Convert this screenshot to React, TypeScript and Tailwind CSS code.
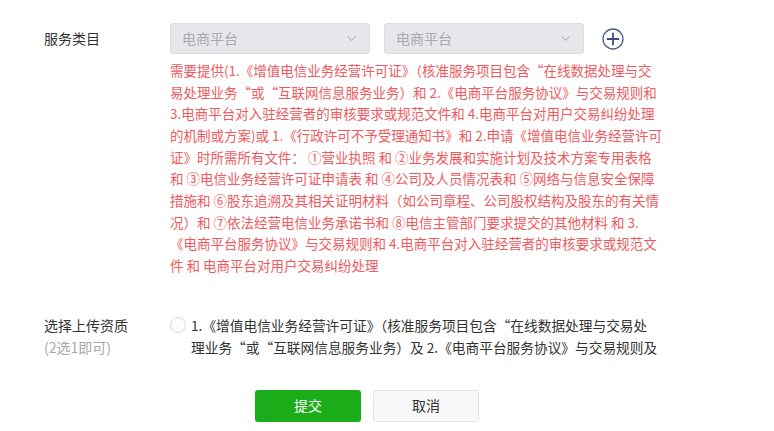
import { ChevronDown } from "lucide-react";

const notice = [
  "需要提供(1.《增值电信业务经营许可证》（核准服务项目包含“在线数据处理与交",
  "易处理业务“或“互联网信息服务业务）和 2.《电商平台服务协议》与交易规则和",
  "3.电商平台对入驻经营者的审核要求或规范文件和 4.电商平台对用户交易纠纷处理",
  "的机制或方案)或 1.《行政许可不予受理通知书》和 2.申请《增值电信业务经营许可",
  "证》时所需所有文件： ①营业执照 和 ②业务发展和实施计划及技术方案专用表格",
  "和 ③电信业务经营许可证申请表 和 ④公司及人员情况表和 ⑤网络与信息安全保障",
  "措施和 ⑥股东追溯及其相关证明材料（如公司章程、公司股权结构及股东的有关情",
  "况）和 ⑦依法经营电信业务承诺书和 ⑧电信主管部门要求提交的其他材料 和 3.",
  "《电商平台服务协议》与交易规则和 4.电商平台对入驻经营者的审核要求或规范文",
  "件 和 电商平台对用户交易纠纷处理",
];

const option = [
  "1.《增值电信业务经营许可证》（核准服务项目包含“在线数据处理与交易处",
  "理业务“或“互联网信息服务业务）及 2.《电商平台服务协议》与交易规则及",
];

function Select() {
  return (
    <div className="flex h-[31px] w-[200px] items-center justify-between rounded-[3px] border border-[#dcdce1] bg-[#e6e6eb] pl-[11px] pr-[10px] text-[#a9a9ae]">
      <span>电商平台</span>
      <ChevronDown size={15} strokeWidth={1.6} className="text-[#9a9aa0]" />
    </div>
  );
}

function PlusCircle() {
  return (
    <svg width="22" height="22" viewBox="0 0 22 22" className="ml-[18px]">
      <circle cx="11" cy="11" r="10" fill="none" stroke="#4a5a8e" strokeWidth="1.3" />
      <path d="M11 5.5v11M5.5 11h11" stroke="#3b4b80" strokeWidth="1.8" strokeLinecap="round" />
    </svg>
  );
}

export default function App() {
  return (
    <div
      className="h-[431px] w-[774px] overflow-hidden bg-white text-[14px] text-[#333]"
      style={{ fontFamily: '"Microsoft YaHei", "Noto Sans CJK SC", "Noto Sans", sans-serif' }}
    >
      <div className="flex flex-col pl-[44px] pt-[23px]">
        {/* 服务类目 */}
        <div className="flex">
          <div className="flex h-[31px] w-[126px] shrink-0 items-center">服务类目</div>
          <div className="flex flex-col">
            <div className="flex items-center gap-[14px]">
              <Select />
              <div className="flex items-center">
                <Select />
                <PlusCircle />
              </div>
            </div>
            <p className="mt-[6px] whitespace-nowrap text-[13.5px] leading-[21.67px] text-[#ef5a60]">
              {notice.map((line, i) => (
                <span key={i} className="block">
                  {line}
                </span>
              ))}
            </p>
          </div>
        </div>

        {/* 选择上传资质 */}
        <div className="mt-[37px] flex">
          <div className="w-[126px] shrink-0 leading-[22px]">
            <div>选择上传资质</div>
            <div className="text-[#a8a8a8]">(2选1即可)</div>
          </div>
          <div className="flex items-start">
            <span className="mt-[3px] h-[16px] w-[16px] shrink-0 rounded-full border border-[#d6d6d6] bg-white" />
            <p className="ml-[5px] whitespace-nowrap text-[13.7px] leading-[22px] text-[#333]">
              {option.map((line, i) => (
                <span key={i} className="block">
                  {line}
                </span>
              ))}
            </p>
          </div>
        </div>

        {/* 操作按钮 */}
        <div className="mt-[32px] flex gap-[12px] pl-[211px]">
          <button className="h-[32px] w-[106px] rounded-[3px] bg-[#1aad19] text-[14px] text-white">
            提交
          </button>
          <button className="h-[32px] w-[106px] rounded-[3px] border border-[#e3e3e3] bg-[#f8f8f8] text-[14px] text-[#333]">
            取消
          </button>
        </div>
      </div>
    </div>
  );
}
